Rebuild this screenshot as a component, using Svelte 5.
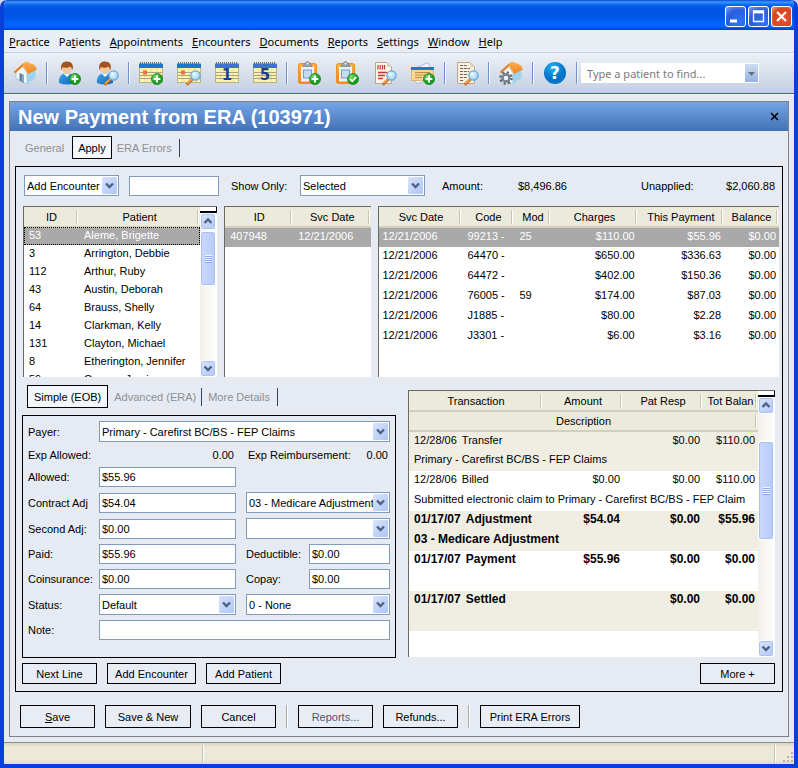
<script lang="ts">

    const menu = [
        ['', 'P', 'ractice'],
        ['Pa', 't', 'ients'],
        ['', 'A', 'ppointments'],
        ['', 'E', 'ncounters'],
        ['', 'D', 'ocuments'],
        ['', 'R', 'eports'],
        ['', 'S', 'ettings'],
        ['', 'W', 'indow'],
        ['', 'H', 'elp'],
    ]

    const toolGroups = [
        [{ icon: 'home', label: 'Home' }],
        [
            { icon: 'person', badge: 'plus', label: 'New patient' },
            { icon: 'person', badge: 'lens', label: 'Find patient' },
        ],
        [
            { icon: 'calendar', badge: 'plus', label: 'New appointment' },
            { icon: 'calendar', badge: 'lens', label: 'Find appointment' },
            { icon: 'day', text: '1', label: 'Day view' },
            { icon: 'day', text: '5', label: 'Work week view' },
        ],
        [
            { icon: 'clipboard', badge: 'plus', label: 'New encounter' },
            { icon: 'clipboard', badge: 'check', label: 'Approve encounter' },
            { icon: 'claim', badge: 'lens', label: 'Find claim' },
            { icon: 'card', badge: 'plus', label: 'New payment' },
        ],
        [{ icon: 'document', badge: 'lens', label: 'Find document' }],
        [{ icon: 'settings', label: 'Practice settings' }],
        [{ icon: 'help', label: 'Help' }],
    ]

    const patients = [
        { id: '53', name: 'Aleme, Brigette' },
        { id: '3', name: 'Arrington, Debbie' },
        { id: '112', name: 'Arthur, Ruby' },
        { id: '43', name: 'Austin, Deborah' },
        { id: '64', name: 'Brauss, Shelly' },
        { id: '14', name: 'Clarkman, Kelly' },
        { id: '131', name: 'Clayton, Michael' },
        { id: '8', name: 'Etherington, Jennifer' },
        { id: '59', name: 'Connor, Jamie' },
    ]

    const services = [
        { date: '12/21/2006', code: '99213 -', mod: '25', charges: '$110.00', payment: '$55.96', balance: '$0.00' },
        { date: '12/21/2006', code: '64470 -', mod: '', charges: '$650.00', payment: '$336.63', balance: '$0.00' },
        { date: '12/21/2006', code: '64472 -', mod: '', charges: '$402.00', payment: '$150.36', balance: '$0.00' },
        { date: '12/21/2006', code: '76005 -', mod: '59', charges: '$174.00', payment: '$87.03', balance: '$0.00' },
        { date: '12/21/2006', code: 'J1885 -', mod: '', charges: '$80.00', payment: '$2.28', balance: '$0.00' },
        { date: '12/21/2006', code: 'J3301 -', mod: '', charges: '$6.00', payment: '$3.16', balance: '$0.00' },
    ]

    const transactions = [
        { date: '12/28/06', type: 'Transfer', amount: '', resp: '$0.00', balance: '$110.00', text: 'Primary - Carefirst BC/BS - FEP Claims' },
        { date: '12/28/06', type: 'Billed', amount: '$0.00', resp: '$0.00', balance: '$110.00', text: 'Submitted electronic claim to Primary - Carefirst BC/BS - FEP Claim' },
        { date: '01/17/07', type: 'Adjustment', amount: '$54.04', resp: '$0.00', balance: '$55.96', text: '03 - Medicare Adjustment', bold: true },
        { date: '01/17/07', type: 'Payment', amount: '$55.96', resp: '$0.00', balance: '$0.00', text: '', bold: true },
        { date: '01/17/07', type: 'Settled', amount: '', resp: '$0.00', balance: '$0.00', text: '', bold: true },
    ]

    let pageTab = $state('Apply')
    let lineTab = $state('Simple (EOB)')
    let selectedPatient = $state('53')
    let selectedService = $state(0)

</script>


{#snippet combo(id, value, label = undefined)}
    <span class="combo">
        <select {id} aria-label={label}>
            <option>{value}</option>
        </select>
        <svg class="arrow" viewBox="0 0 15 17" aria-hidden="true">
            <rect width="15" height="17" rx="1" fill="url(#scrollFill)" />
            <path d="M4 6.5 L7.5 10 L11 6.5" fill="none" stroke="#4d6185" stroke-width="2.4" />
        </svg>
    </span>
{/snippet}

{#snippet scrollbar(offset, size)}
    <div class="scrollbar" aria-hidden="true">
        <div class="nub"></div>
        <div class="scroll-button">
            <svg viewBox="0 0 14 14"><path d="M3.5 9 L7 5.5 L10.5 9" /></svg>
        </div>
        <div class="thumb" style:margin-top="{offset}px" style:height="{size}px">
            <i></i><i></i><i></i><i></i>
        </div>
        <div class="scroll-button last">
            <svg viewBox="0 0 14 14"><path d="M3.5 5.5 L7 9 L10.5 5.5" /></svg>
        </div>
    </div>
{/snippet}

{#snippet badge(kind)}
    {#if kind === 'plus'}
        <circle cx="18" cy="18" r="5.5" fill="url(#greenFill)" stroke="#18811c" stroke-width=".8" />
        <path d="M18 14.6 V21.4 M14.6 18 H21.4" stroke="#fff" stroke-width="2" />
    {:else if kind === 'check'}
        <circle cx="18" cy="18" r="5.5" fill="url(#greenFill)" stroke="#18811c" stroke-width=".8" />
        <path d="M15 18 L17.3 20.3 L21.2 15.8" fill="none" stroke="#fff" stroke-width="1.8" />
    {:else if kind === 'lens'}
        <path d="M15.5 18 L10.5 22.8" stroke="#c96a1c" stroke-width="3" stroke-linecap="round" />
        <path d="M15.5 17.6 L10.5 22.2" stroke="#f6b56a" stroke-width="1.2" stroke-linecap="round" />
        <circle cx="18.5" cy="14.5" r="4.6" fill="url(#lensFill)" stroke="#6ba3d0" stroke-width="1.2" />
    {/if}
{/snippet}

{#snippet house()}
    <path d="M14 12 L22.5 8.5 V17 L14 23 Z" fill="#9fd3f0" />
    <path d="M3 10.5 L9 4.5 L14 12 V23 L3 17.5 Z" fill="#f1f9fd" stroke="#8fc0dd" stroke-width=".7" />
    <path d="M6.5 12 L11 14 V22 L6.5 19.5 Z" fill="#56799c" />
    <path d="M8.5 13.5 L11 14.6 V21.4 L8.5 20 Z" fill="#86a9c6" />
    <path d="M9 3.5 L13 .5 L21.5 4 L24 8.5 L15 13 Z" fill="url(#roofFill)" />
    <path d="M13 .5 L9 3.5 L15 13" fill="none" stroke="#fcc57c" stroke-width=".8" />
    <path d="M10.5 2 L.5 11 L2.5 12.2 L9.5 5.8 Z" fill="#e67d20" />
{/snippet}

{#snippet toolIcon(tool)}
    <svg viewBox="0 0 24 24" aria-hidden="true">
        {#if tool.icon === 'home'}
            {@render house()}
        {:else if tool.icon === 'settings'}
            {@render house()}
            <circle cx="7" cy="17" r="5.6" fill="none" stroke="#646c75" stroke-width="2.4" stroke-dasharray="2.2 2.2" />
            <circle cx="7" cy="17" r="3.5" fill="#eef2f6" stroke="#78818a" stroke-width="2.4" />
        {:else if tool.icon === 'person'}
            <path d="M2 22 C1 16 5 12 10 12 C15 12 18 15 18 22 Q10 25 2 22 Z" fill="url(#shirtFill)" />
            <path d="M6.5 12.5 L10 16 L13.5 12.5 Z" fill="#fff" />
            <circle cx="10" cy="7.5" r="5" fill="#f6c79b" />
            <path d="M4.5 9 C3 3 6 .5 10 .5 C14.5 .5 17 3.5 15.5 9 C14.5 8 14.5 6.5 13.5 5.5 C10 7.5 7.5 6.5 6 6 Z" fill="#a3521d" />
        {:else if tool.icon === 'calendar' || tool.icon === 'day'}
            <rect x=".5" y="2.5" width="23" height="19" fill="#fbf2ae" stroke="#b5b48d" />
            <path d="M1 11.5 H23 M1 14.5 H23 M1 17.5 H23" stroke="#8e8f74" stroke-width=".8" />
            <path d="M6 8 V21 M12 8 V21 M18 8 V21" stroke="#c9c596" stroke-width=".7" stroke-dasharray="1.4 1" />
            <rect y="3" width="24" height="4" fill={tool.icon === 'day' ? '#3f72cf' : '#1c76cb'} />
            <path d="M1 2 H23" stroke="#6c727c" stroke-width="2" stroke-dasharray="1 1" />
            {#if tool.icon === 'calendar'}
                <rect x="4" y="9.5" width="4" height="4" fill="#f26f38" />
            {:else}
                <text x="12" y="19" text-anchor="middle">{tool.text}</text>
            {/if}
        {:else if tool.icon === 'clipboard'}
            <rect x="1.5" y="2.5" width="18" height="20" rx="2" fill="url(#roofFill)" stroke="#e88f2a" />
            <rect x="4" y="5" width="13" height="15.5" fill="#e9f1fa" />
            <rect x="6.5" y="9" width="8" height="8" fill="#c4dcf5" stroke="#6f9fd4" />
            <path d="M5.5 5.5 L7.5 3 Q10.5 -2 13.5 3 L15.5 5.5 Z" fill="#9aa4b0" stroke="#5f6976" stroke-width=".6" />
            <circle cx="10.5" cy="2.6" r="1" fill="#eef3f8" />
        {:else if tool.icon === 'claim'}
            <path d="M2.5 1.5 H14 L18.5 6 V22.5 H2.5 Z" fill="#fdf5e8" stroke="#b9a58d" />
            <path d="M14 1.5 V6 H18.5 Z" fill="#e1d2ba" />
            <path d="M5 4 V8.5 M7.2 4 V8.5 M9.5 4 V8.5 M11.5 4 V8.5" stroke="#c13a30" stroke-width="1.2" />
            <path d="M5 11.5 H14 M5 14.5 H12 M5 17.5 H10" stroke="#c13a30" stroke-width="1.5" />
        {:else if tool.icon === 'document'}
            <path d="M2.5 1.5 H15 L19.5 6 V22.5 H2.5 Z" fill="#faf1dc" stroke="#b9a88d" />
            <path d="M15 1.5 V6 H19.5 Z" fill="#e1d2ba" />
            <path d="M5 4.5 H12 M5 7.5 H15 M5 10.5 H14 M5 13.5 H13 M5 16.5 H12 M5 19.5 H9" stroke="#6d675d" stroke-width="1" stroke-dasharray="3 .8" />
        {:else if tool.icon === 'card'}
            <path d="M3 8 L17 1.5 L20 8 M3 20 L7 22.5 L14 20" fill="#f7f8fa" stroke="#a2abb5" stroke-width=".8" />
            <rect x=".5" y="6.5" width="22" height="13" fill="#fbd594" stroke="#d9b577" />
            <rect x="0" y="6" width="23" height="3" fill="#1c7cd3" />
            <path d="M4 11.5 H19 M4 14 H15 M4 16.5 H11" stroke="#c58b43" />
        {:else}
            <circle cx="12" cy="12" r="11" fill="url(#helpFill)" />
            <text class="question" x="12" y="18" text-anchor="middle">?</text>
        {/if}
        {@render badge(tool.badge)}
    </svg>
{/snippet}


<svg class="defs" width="0" height="0" aria-hidden="true">
    <defs>
        <linearGradient id="scrollFill" x2="1" y2="1">
            <stop stop-color="#d8e3fc" /><stop offset="1" stop-color="#aec5f7" />
        </linearGradient>
        <radialGradient id="greenFill" cx=".35" cy=".3">
            <stop stop-color="#7be070" /><stop offset="1" stop-color="#179b20" />
        </radialGradient>
        <radialGradient id="lensFill" cx=".4" cy=".35">
            <stop stop-color="#f1fbff" /><stop offset="1" stop-color="#a4dbf5" />
        </radialGradient>
        <linearGradient id="roofFill" x2="0" y2="1">
            <stop stop-color="#fdb04e" /><stop offset="1" stop-color="#ee8420" />
        </linearGradient>
        <linearGradient id="shirtFill" x2="1" y2="1">
            <stop stop-color="#3ea6ea" /><stop offset="1" stop-color="#0b63b8" />
        </linearGradient>
        <radialGradient id="helpFill" cx=".4" cy=".25">
            <stop stop-color="#22b1ee" /><stop offset="1" stop-color="#0573c8" />
        </radialGradient>
    </defs>
</svg>

<div class="window">
    <div class="title-bar">
        <button class="caption" aria-label="Minimize">
            <svg viewBox="0 0 19 19"><path d="M4 14 H11" stroke="#fff" stroke-width="3" /></svg>
        </button>
        <button class="caption" aria-label="Maximize">
            <svg viewBox="0 0 19 19"><path d="M4.5 4 H14.5 V14.5 H4.5 Z M4 5.5 H15" fill="none" stroke="#fff" stroke-width="1.3" /><path d="M4 5 H15" stroke="#fff" stroke-width="2.4" /></svg>
        </button>
        <button class="caption close" aria-label="Close window">
            <svg viewBox="0 0 19 19"><path d="M5 5 L14 14 M14 5 L5 14" stroke="#fff" stroke-width="2.2" /></svg>
        </button>
    </div>

    <nav class="menu">
        {#each menu as [before, key, after]}
            <button>{before}<u>{key}</u>{after}</button>
        {/each}
    </nav>

    <div class="toolbar">
        {#each toolGroups as group}
            <div class="tool-group">
                {#each group as tool}
                    <button class="tool" aria-label={tool.label}>{@render toolIcon(tool)}</button>
                {/each}
            </div>
        {/each}
        <div class="search">
            <input type="text" aria-label="Find patient" placeholder="Type a patient to find..." />
            <button aria-label="Show recent patients">
                <svg viewBox="0 0 13 17"><path d="M3 7 H10 L6.5 11 Z" fill="#6a6f78" /></svg>
            </button>
        </div>
    </div>

    <main>
        <section class="panel">
            <header>
                <h1>New Payment from ERA (103971)</h1>
                <button aria-label="Close payment">
                    <svg viewBox="0 0 9 9"><path d="M1 1 L8 8 M8 1 L1 8" stroke="#000" stroke-width="1.6" /></svg>
                </button>
            </header>

            <div class="tabs">
                {#each ['General', 'Apply', 'ERA Errors'] as tab}
                    <button class:active={pageTab === tab} onclick={() => (pageTab = tab)}>{tab}</button>
                {/each}
            </div>

            <div class="apply">
                <div class="filters">
                    <div class="add-type">{@render combo('add-type', 'Add Encounter', 'Add type')}</div>
                    <input class="add-id" type="text" aria-label="Encounter number" />
                    <label for="show-only">Show Only:</label>
                    <div class="show-only">{@render combo('show-only', 'Selected')}</div>
                    <span class="caption-text">Amount:</span>
                    <span>$8,496.86</span>
                    <span class="unapplied">Unapplied:</span>
                    <span>$2,060.88</span>
                </div>

                <div class="lists">
                    <div class="list">
                        <div class="list-body">
                            <table class="patients">
                                <thead>
                                    <tr><th class="patient-id">ID</th><th>Patient</th></tr>
                                </thead>
                                <tbody>
                                    {#each patients as patient}
                                        <tr class:selected={selectedPatient === patient.id} onclick={() => (selectedPatient = patient.id)}>
                                            <td>{patient.id}</td>
                                            <td>{patient.name}</td>
                                        </tr>
                                    {/each}
                                </tbody>
                            </table>
                        </div>
                        {@render scrollbar(1, 55)}
                    </div>

                    <div class="list">
                        <div class="list-body">
                            <table>
                                <thead>
                                    <tr><th class="encounter-id">ID</th><th>Svc Date</th></tr>
                                </thead>
                                <tbody>
                                    <tr class="selected"><td>407948</td><td>12/21/2006</td></tr>
                                </tbody>
                            </table>
                        </div>
                    </div>

                    <div class="list">
                        <div class="list-body">
                            <table class="services">
                                <thead>
                                    <tr>
                                        <th class="date">Svc Date</th>
                                        <th class="code">Code</th>
                                        <th class="mod">Mod</th>
                                        <th>Charges</th>
                                        <th>This Payment</th>
                                        <th class="balance">Balance</th>
                                    </tr>
                                </thead>
                                <tbody>
                                    {#each services as service, i}
                                        <tr class:selected={selectedService === i} onclick={() => (selectedService = i)}>
                                            <td class="first">{service.date}</td>
                                            <td>{service.code}</td>
                                            <td>{service.mod}</td>
                                            <td class="number">{service.charges}</td>
                                            <td class="number">{service.payment}</td>
                                            <td class="number">{service.balance}</td>
                                        </tr>
                                    {/each}
                                </tbody>
                            </table>
                        </div>
                    </div>
                </div>

                <div class="details">
                    <div class="line">
                        <div class="tabs line-tabs">
                            {#each ['Simple (EOB)', 'Advanced (ERA)', 'More Details'] as tab}
                                <button class:active={lineTab === tab} onclick={() => (lineTab = tab)}>{tab}</button>
                            {/each}
                        </div>

                        <form onsubmit={(e) => e.preventDefault()}>
                            <label for="payer">Payer:</label>
                            <div class="wide">{@render combo('payer', 'Primary - Carefirst BC/BS - FEP Claims')}</div>

                            <span>Exp Allowed:</span>
                            <span class="expected">0.00</span>
                            <span class="expected"><span>Exp Reimbursement:</span>0.00</span>

                            <label for="allowed">Allowed:</label>
                            <input id="allowed" type="text" value="$55.96" />
                            <span></span>

                            <label for="contract">Contract Adj</label>
                            <input id="contract" type="text" value="$54.04" />
                            {@render combo('contract-reason', '03 - Medicare Adjustment', 'Contract adjustment reason')}

                            <label for="second">Second Adj:</label>
                            <input id="second" type="text" value="$0.00" />
                            {@render combo('second-reason', '', 'Second adjustment reason')}

                            <label for="paid">Paid:</label>
                            <input id="paid" type="text" value="$55.96" />
                            <div class="pair">
                                <label for="deductible">Deductible:</label>
                                <input id="deductible" type="text" value="$0.00" />
                            </div>

                            <label for="coinsurance">Coinsurance:</label>
                            <input id="coinsurance" type="text" value="$0.00" />
                            <div class="pair">
                                <label for="copay">Copay:</label>
                                <input id="copay" type="text" value="$0.00" />
                            </div>

                            <label for="status">Status:</label>
                            {@render combo('status', 'Default')}
                            {@render combo('status-reason', '0 - None', 'Status reason')}

                            <label for="note">Note:</label>
                            <input id="note" class="wide" type="text" />
                        </form>
                    </div>

                    <div class="list history">
                        <div class="list-body">
                            <table class="transactions">
                                <thead>
                                    <tr>
                                        <th>Transaction</th>
                                        <th class="amount-col">Amount</th>
                                        <th class="amount-col">Pat Resp</th>
                                        <th class="total-col">Tot Balan</th>
                                    </tr>
                                    <tr><th colspan="4">Description</th></tr>
                                </thead>
                                {#each transactions as entry}
                                    <tbody class:bold={entry.bold}>
                                        <tr>
                                            <td>{entry.date}<span class="type">{entry.type}</span></td>
                                            <td class="number">{entry.amount}</td>
                                            <td class="number">{entry.resp}</td>
                                            <td class="number">{entry.balance}</td>
                                        </tr>
                                        <tr><td colspan="4">{entry.text}</td></tr>
                                    </tbody>
                                {/each}
                            </table>
                        </div>
                        {@render scrollbar(27, 99)}
                    </div>
                </div>

                <div class="actions">
                    <button>Next Line</button>
                    <button class="medium">Add Encounter</button>
                    <button>Add Patient</button>
                    <button class="more">More +</button>
                </div>
            </div>

            <div class="actions footer">
                <button><u>S</u>ave</button>
                <button class="medium">Save &amp; New</button>
                <button>Cancel</button>
                <hr />
                <button class="muted">Reports...</button>
                <button>Refunds...</button>
                <hr />
                <button class="large">Print ERA Errors</button>
            </div>
        </section>
    </main>

    <div class="status-bar">
        <span class="status-main"></span>
        <span class="status-rest"></span>
        <svg class="grip" viewBox="0 0 12 12" aria-hidden="true">
            <path d="M9 1h2v2h-2z M9 5h2v2h-2z M9 9h2v2h-2z M5 5h2v2h-2z M5 9h2v2h-2z M1 9h2v2h-2z" fill="#b8b4a3" />
        </svg>
    </div>
</div>


<style>

    :global(body) {
        background: #c9d8f0;
    }

    .defs {
        position: absolute;
    }

    .window {
        box-sizing: border-box;
        min-width: 780px;
        min-height: 100vh;
        display: flex;
        flex-direction: column;
        border: solid #0a3fdc;
        border-width: 0 4px 4px;
        border-radius: 7px 7px 0 0;
        overflow: hidden;
        background: #e6ebf3;
        font-family: "Liberation Sans", Arial, sans-serif;
        font-size: 11px;
        line-height: 14px;
        color: #000;
    }

    .window * {
        box-sizing: border-box;
    }

    button, input, select {
        font: inherit;
        color: inherit;
        margin: 0;
    }

    button {
        cursor: pointer;
    }

    .title-bar {
        height: 30px;
        margin: 0 -4px;
        padding: 6px 6px 0;
        display: flex;
        justify-content: flex-end;
        gap: 2px;
        background: linear-gradient(#0a4bd0, #3d95ff 2px, #0a63f0 5px, #0054e3 9px, #0055e5 16px, #0265fe 24px, #0160f8 27px, #003dd7);
    }

    .caption {
        width: 21px;
        height: 21px;
        padding: 0;
        border: 1px solid #fff;
        border-radius: 3px;
        background: radial-gradient(circle at 70% 80%, #2f74f6, #2a5ce0 60%, #7f9ff0);
    }

    .caption.close {
        background: radial-gradient(circle at 60% 60%, #e8542e, #d8441d 60%, #ec9a80);
    }

    .caption svg {
        display: block;
        width: 19px;
        height: 19px;
    }

    .menu {
        height: 23px;
        display: flex;
        align-items: center;
        gap: 9px;
        padding: 2px 5px 0;
        background: #e9eef5;
        border-bottom: 1px solid #c9d0e3;
    }

    .menu button {
        padding: 0;
        border: none;
        background: none;
        font-family: "Noto Sans", Tahoma, sans-serif;
    }

    .toolbar {
        height: 41px;
        display: flex;
        align-items: center;
        background: linear-gradient(#edf1f7, #c4cfe0);
        border-bottom: 1px solid #3a64a4;
    }

    .tool-group {
        height: 22px;
        display: flex;
        align-items: center;
        gap: 14px;
        padding: 0 9px;
        border-right: 1px solid #6f93cf;
        box-shadow: 1px 0 #f6f9fd;
        margin-right: 1px;
    }

    .tool {
        width: 24px;
        height: 24px;
        padding: 0;
        border: none;
        background: none;
    }

    .tool svg {
        display: block;
        overflow: visible;
    }

    .tool text {
        font: bold 15px "DejaVu Sans", sans-serif;
        fill: #1c3f94;
    }

    .tool .question {
        font-size: 17px;
        fill: #fff;
    }

    .search {
        width: 178px;
        height: 20px;
        margin-left: 3px;
        display: flex;
        padding: 1px;
        background: #fff;
    }

    .search input {
        flex: 1;
        font-family: "Noto Sans", Tahoma, sans-serif;
    }

    .search input::placeholder {
        color: #7b7b7b;
        opacity: 1;
    }

    .search button {
        width: 13px;
        padding: 0;
        border: none;
        background: linear-gradient(#cfddf3, #93b2e4);
    }

    .search svg {
        display: block;
    }

    main {
        flex: 1;
        padding: 7px 5px 5px;
        border-top: 1px solid #f2f5fa;
        margin-bottom: -1px;
    }

    .panel {
        border: 1px solid #808080;
        margin-top: -1px;
        padding-bottom: 8px;
    }

    header {
        height: 29px;
        display: flex;
        align-items: center;
        justify-content: space-between;
        padding: 0 9px 0 8px;
        background: linear-gradient(#74a5e8, #4272b5);
    }

    h1 {
        margin: 0;
        font-size: 20px;
        line-height: 24px;
        font-weight: bold;
        color: #fff;
    }

    header button {
        width: 9px;
        height: 9px;
        padding: 0;
        border: none;
        background: none;
    }

    header svg {
        display: block;
    }

    .tabs {
        display: flex;
        padding: 5px 10px 7px;
    }

    .tabs button {
        height: 23px;
        padding: 0 5px;
        border: none;
        background: none;
        color: #8d8f93;
        white-space: nowrap;
    }

    .tabs button.active {
        margin-left: 3px;
        border: 1px solid #000;
        background: #f3f7fb;
        color: #000;
    }

    .tabs button:last-child {
        padding-right: 8px;
        background: linear-gradient(#2e4468, #2e4468) right center / 1px 18px no-repeat;
    }

    .line-tabs {
        padding: 0 0 7px 5px;
    }

    .line-tabs button {
        padding: 0 6px;
    }

    .line-tabs button.active {
        margin: 0;
    }

    .line-tabs button:nth-child(2) {
        background: linear-gradient(#2e4468, #2e4468) right center / 1px 18px no-repeat;
    }

    .apply {
        margin: 0 5px;
        padding: 8px 7px 7px 6px;
        border: 1px solid #000;
    }

    .filters {
        display: flex;
        align-items: center;
        padding-left: 2px;
    }

    .add-type {
        width: 95px;
    }

    .add-id {
        width: 90px;
        margin: 0 12px 0 10px;
    }

    .filters label {
        width: 69px;
    }

    .show-only {
        width: 125px;
        margin-right: 17px;
    }

    .caption-text {
        width: 76px;
    }

    .unapplied {
        width: 85px;
        margin-left: auto;
    }

    input[type="text"] {
        min-width: 0;
        height: 20px;
        padding: 0 2px;
        border: 1px solid #7f9db9;
        border-radius: 0;
        background: #fff;
        outline: none;
    }

    .search input[type="text"] {
        height: 18px;
        padding: 0 5px;
        border: none;
    }

    .combo {
        position: relative;
        display: block;
        min-width: 0;
    }

    select {
        display: block;
        appearance: none;
        width: 100%;
        height: 21px;
        padding: 0 16px 0 2px;
        border: 1px solid #7f9db9;
        border-radius: 0;
        background: #fff;
        outline: none;
    }

    .arrow {
        position: absolute;
        top: 2px;
        right: 2px;
        width: 15px;
        height: 17px;
        pointer-events: none;
    }

    .lists {
        display: grid;
        grid-template-columns: 194fr 147fr 400fr;
        gap: 7px;
        margin: 10px -4px 0 1px;
    }

    .list {
        min-width: 0;
        height: 171px;
        display: flex;
        border: solid #6b6b66;
        border-width: 1px 0 0 1px;
        background: #fff;
    }

    .list-body {
        flex: 1;
        min-width: 0;
        overflow: hidden;
    }

    table {
        width: 100%;
        table-layout: fixed;
        border-collapse: collapse;
    }

    th {
        height: 20px;
        padding: 0;
        font-weight: normal;
        text-align: center;
        white-space: nowrap;
        overflow: hidden;
        border-bottom: 2px solid #d3cfbf;
        background: linear-gradient(90deg, #c7c5b2 50%, #fff 50%) right 1px center / 2px 14px no-repeat #ebeadb;
    }

    td {
        height: 20px;
        padding: 0 2px 4px 5px;
        white-space: nowrap;
    }

    .patients td {
        height: 18px;
        padding-bottom: 3px;
    }

    td.first {
        padding-left: 3px;
    }

    td.number {
        padding-left: 0;
        padding-right: 3px;
        text-align: right;
    }

    tr.selected {
        background: #a9a9a9;
        color: #fff;
    }

    .patients tr.selected {
        outline: 1px dotted #000;
        outline-offset: -1px;
    }

    .patient-id {
        width: 55px;
    }

    .encounter-id {
        width: 68px;
    }

    .date {
        width: 83px;
    }

    .code {
        width: 52px;
    }

    .mod {
        width: 37px;
    }

    .balance {
        width: 55px;
    }

    .scrollbar {
        width: 17px;
        display: flex;
        flex-direction: column;
        background: linear-gradient(90deg, #f2f0ea, #fefefc);
    }

    .nub {
        height: 6px;
        border: solid #000;
        border-width: 0 1px 2px 0;
        background: #fff;
    }

    .scroll-button, .thumb {
        flex: none;
        width: 16px;
        border: 1px solid #fff;
        border-radius: 3px;
        box-shadow: inset 0 0 0 1px #a9c0f0;
        background: linear-gradient(135deg, #d8e3fc, #b4c9f8);
    }

    .scroll-button {
        height: 17px;
    }

    .scroll-button.last {
        margin-top: auto;
    }

    .scroll-button svg {
        display: block;
    }

    .scroll-button path {
        fill: none;
        stroke: #4d6185;
        stroke-width: 2.4;
    }

    .thumb {
        display: flex;
        flex-direction: column;
        align-items: center;
        justify-content: center;
        gap: 1px;
        background: linear-gradient(90deg, #cad8fc, #b7cbfa);
    }

    .thumb i {
        width: 7px;
        height: 1px;
        background: #f3f7ff;
        box-shadow: 0 1px #8eaae4;
    }

    .details {
        display: grid;
        grid-template-columns: 374fr 367fr;
        gap: 12px;
        padding-top: 8px;
    }

    form {
        height: 243px;
        display: grid;
        grid-template-columns: 61px minmax(0, 137fr) minmax(0, 144fr);
        grid-template-rows: 21px 15px 20px 21px 21px 20px 20px 21px 20px;
        align-items: center;
        align-content: start;
        gap: 5px 10px;
        padding: 5px;
        border: 1px solid #000;
        white-space: nowrap;
    }

    .wide {
        grid-column: 2 / -1;
    }

    .expected {
        display: flex;
        justify-content: flex-end;
        padding: 0 2px;
    }

    .expected span {
        margin-right: auto;
    }

    .pair {
        display: grid;
        grid-template-columns: 63px 1fr;
        align-items: center;
    }

    .history {
        height: 267px;
        margin-top: 5px;
    }

    .transactions tbody:nth-of-type(odd) {
        background: #f0eee2;
    }

    .transactions .bold {
        font-size: 12px;
        font-weight: bold;
    }

    .type {
        margin-left: 5px;
    }

    .amount-col {
        width: 80px;
    }

    .total-col {
        width: 55px;
    }

    .actions {
        display: flex;
        gap: 10px;
        padding-top: 5px;
    }

    .actions button {
        min-width: 75px;
        height: 21px;
        padding: 0 5px;
        border: 1px solid #000;
        background: #e8edf5;
    }

    .actions .medium {
        min-width: 89px;
    }

    .actions .large {
        min-width: 100px;
    }

    .actions .more {
        margin-left: auto;
    }

    .actions .muted {
        color: #4a5873;
    }

    .footer {
        padding: 13px 10px 0;
    }

    .footer button {
        height: 23px;
    }

    .footer .medium {
        min-width: 86px;
    }

    hr {
        width: 2px;
        height: 23px;
        margin: 0;
        border: solid;
        border-width: 0 1px;
        border-color: #aca899 #fff #fff #aca899;
    }

    .status-bar {
        height: 22px;
        display: flex;
        align-items: center;
        border-top: 1px solid #8f8e84;
        background: linear-gradient(#d8d5c5, #ece9d8 4px, #ece9d8 17px, #dedac8);
    }

    .status-bar span {
        height: 17px;
        border-right: 1px solid #fff;
        box-shadow: inset -1px 0 #c5c2b2;
    }

    .status-main {
        width: 200px;
    }

    .status-rest {
        flex: 1;
    }

    .grip {
        width: 12px;
        height: 12px;
        margin: 6px 0 0 6px;
    }

</style>
